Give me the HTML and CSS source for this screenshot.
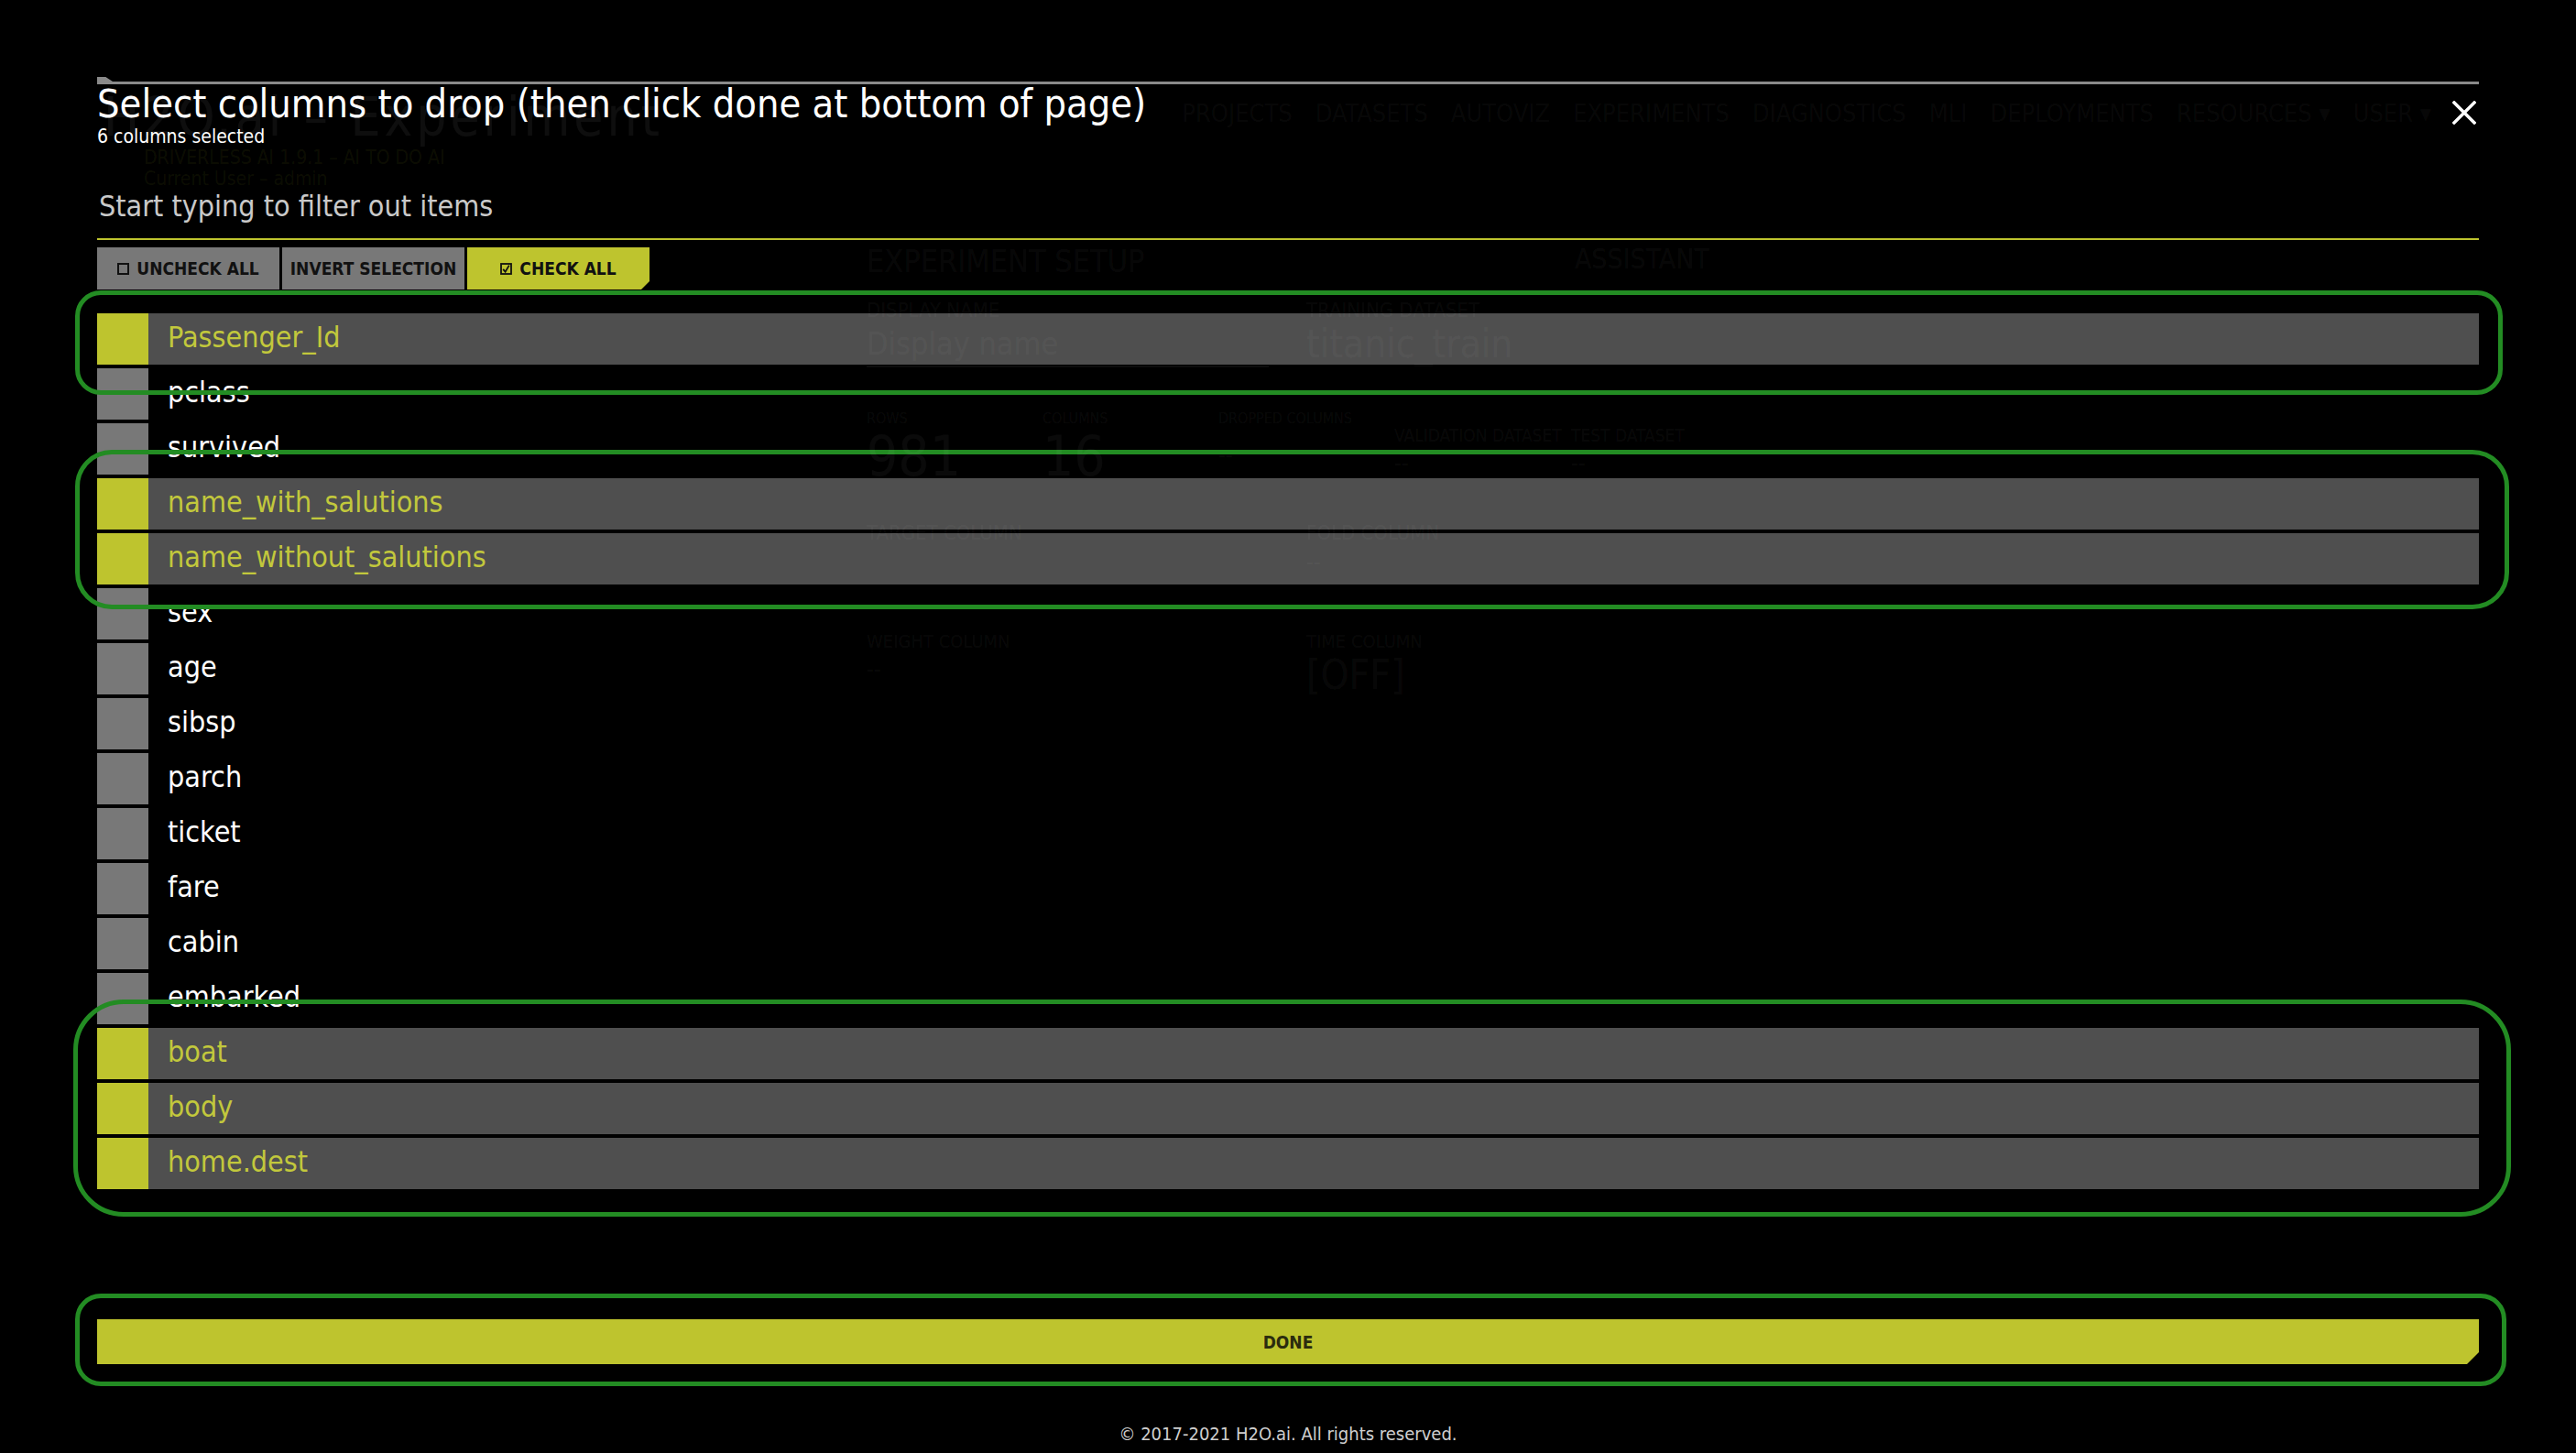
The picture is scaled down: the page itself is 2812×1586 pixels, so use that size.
FILE: index.html
```html
<!DOCTYPE html>
<html lang="en">
<head>
<meta charset="utf-8">
<title>Select columns to drop</title>
<link rel="stylesheet" href="styles.css">
</head>
<body>
<div class="page">
  <header class="page-head">
    <div class="brand">
      <div class="brand-title">H2O.ai – Experiment</div>
      <div class="brand-sub">DRIVERLESS AI 1.9.1 – AI TO DO AI</div>
      <div class="brand-user">Current User – admin</div>
    </div>
    <nav class="nav">
      <span>PROJECTS</span><span>DATASETS</span><span>AUTOVIZ</span><span>EXPERIMENTS</span><span>DIAGNOSTICS</span><span>MLI</span><span>DEPLOYMENTS</span><span>RESOURCES ▾</span><span>USER ▾</span>
    </nav>
  </header>
  <section class="setup">
    <div class="setup-head"><div class="setup-title">EXPERIMENT SETUP</div><div class="assist">ASSISTANT</div></div>
    <div class="frow frow-a">
      <div class="field w480"><div class="lbl">DISPLAY NAME</div><div class="val val-input">Display name</div></div>
      <div class="field"><div class="lbl">TRAINING DATASET</div><div class="val val-big">titanic_train</div></div>
    </div>
    <div class="frow frow-b">
      <div class="field w192"><div class="lbl sm">ROWS</div><div class="val val-num">981</div></div>
      <div class="field w192"><div class="lbl sm">COLUMNS</div><div class="val val-num">16</div></div>
      <div class="field w192"><div class="lbl sm">DROPPED COLUMNS</div><div class="val dash dash-drop">--</div></div>
      <div class="field w193 low"><div class="lbl md">VALIDATION DATASET</div><div class="val dash">--</div></div>
      <div class="field low"><div class="lbl md">TEST DATASET</div><div class="val dash">--</div></div>
    </div>
    <div class="frow frow-c">
      <div class="field w480"><div class="lbl">TARGET COLUMN</div></div>
      <div class="field"><div class="lbl">FOLD COLUMN</div><div class="val dash">--</div></div>
    </div>
    <div class="frow frow-d">
      <div class="field w480"><div class="lbl lg">WEIGHT COLUMN</div><div class="val dash">--</div></div>
      <div class="field"><div class="lbl lg">TIME COLUMN</div><div class="val val-off">[OFF]</div></div>
    </div>
  </section>
</div>

<div class="modal">
  <div class="modal-inner">
    <div class="topline"></div>
    <div class="title-row">
      <h1 class="title">Select columns to drop (then click done at bottom of page)</h1>
      <button class="close" aria-label="Close">
        <svg width="26" height="26" viewBox="0 0 26 26"><path d="M2 2 L24 24 M24 2 L2 24" stroke="#fff" stroke-width="3.4" stroke-linecap="square" fill="none"/></svg>
      </button>
    </div>
    <div class="count">6 columns selected</div>
    <input class="filter" type="text" placeholder="Start typing to filter out items">
    <div class="actions">
      <button class="act act-grey">
        <svg class="ico" width="13" height="13" viewBox="0 0 13 13"><rect x="1" y="1" width="11" height="11" fill="none" stroke="#111" stroke-width="2"/></svg>UNCHECK ALL</button>
      <button class="act act-grey">INVERT SELECTION</button>
      <button class="act act-yellow">
        <svg class="ico" width="13" height="13" viewBox="0 0 13 13"><rect x="1" y="1" width="11" height="11" fill="none" stroke="#111" stroke-width="1.8"/><path d="M3.2 6.8 L5.6 9.6 L9.8 2.6" fill="none" stroke="#111" stroke-width="1.8"/></svg>CHECK ALL</button>
    </div>
    <ul class="cols">
      <li class="col on"><span class="box"></span><span class="name">Passenger_Id</span></li>
      <li class="col"><span class="box"></span><span class="name">pclass</span></li>
      <li class="col"><span class="box"></span><span class="name">survived</span></li>
      <li class="col on"><span class="box"></span><span class="name">name_with_salutions</span></li>
      <li class="col on"><span class="box"></span><span class="name">name_without_salutions</span></li>
      <li class="col"><span class="box"></span><span class="name">sex</span></li>
      <li class="col"><span class="box"></span><span class="name">age</span></li>
      <li class="col"><span class="box"></span><span class="name">sibsp</span></li>
      <li class="col"><span class="box"></span><span class="name">parch</span></li>
      <li class="col"><span class="box"></span><span class="name">ticket</span></li>
      <li class="col"><span class="box"></span><span class="name">fare</span></li>
      <li class="col"><span class="box"></span><span class="name">cabin</span></li>
      <li class="col"><span class="box"></span><span class="name">embarked</span></li>
      <li class="col on"><span class="box"></span><span class="name">boat</span></li>
      <li class="col on"><span class="box"></span><span class="name">body</span></li>
      <li class="col on"><span class="box"></span><span class="name">home.dest</span></li>
    </ul>
    <button class="done">DONE</button>
    <footer class="foot">© 2017-2021 H2O.ai. All rights reserved.</footer>
  </div>
  <div class="hl hl-1"></div>
  <div class="hl hl-2"></div>
  <div class="hl hl-3"></div>
  <div class="hl hl-4"></div>
</div>
</body>
</html>
```

FILE: styles.css
```css
html, body {
  margin: 0;
  padding: 0;
  width: 2812px;
  height: 1586px;
  overflow: hidden;
  background: #000;
}
body {
  position: relative;
  font-family: "DejaVu Sans Condensed", "DejaVu Sans", sans-serif;
  font-stretch: condensed;
  color: #fff;
}

/* ---------- faint background page ---------- */
.page {
  position: relative;
  z-index: 2;
  pointer-events: none;
  color: rgba(255, 255, 255, 0.055);
}
.page-head {
  display: flex;
  justify-content: space-between;
  align-items: flex-start;
  padding: 100px 158px 0 113px;
}
.brand-title {
  font-size: 58px;
  line-height: 56px;
  font-weight: 300;
  letter-spacing: 4px;
}
.brand-sub {
  margin-top: 6px;
  margin-left: 44px;
  font-size: 21px;
  line-height: 21px;
  color: rgba(190, 196, 46, 0.085);
}
.brand-user {
  margin-top: 2px;
  margin-left: 44px;
  font-size: 21px;
  line-height: 21px;
  color: rgba(190, 196, 46, 0.075);
}
.nav {
  margin-top: 10px;
  display: flex;
  gap: 25px;
  font-size: 27px;
  line-height: 27px;
  color: rgba(255, 255, 255, 0.045);
}
.setup {
  margin: 62px 0 0 946px;
  width: 920px;
}
.setup-head {
  display: flex;
  justify-content: space-between;
  align-items: flex-start;
}
.setup-title {
  font-size: 34px;
  line-height: 34px;
}
.assist {
  font-size: 30px;
  line-height: 30px;
}
.frow {
  display: flex;
  align-items: flex-start;
}
.frow-a { margin-top: 26px; }
.frow-b { margin-top: 48px; }
.frow-c { margin-top: 43px; }
.frow-d { margin-top: 64px; }
.field { flex: none; }
.w480 { width: 480px; }
.w192 { width: 192px; }
.w193 { width: 193px; }
.low { margin-top: 17px; }
.lbl {
  font-size: 22px;
  line-height: 22px;
}
.lbl.sm { font-size: 16px; line-height: 16px; }
.lbl.md { font-size: 19px; line-height: 19px; }
.lbl.lg { font-size: 20px; line-height: 20px; }
.val-input {
  margin-top: 8px;
  width: 439px;
  font-size: 34px;
  line-height: 34px;
  padding-bottom: 7px;
  border-bottom: 2px solid rgba(255, 255, 255, 0.05);
}
.val-big {
  margin-top: 5px;
  font-size: 42px;
  line-height: 42px;
}
.val-num {
  margin-top: 3px;
  font-size: 60px;
  line-height: 60px;
  font-weight: 300;
  color: rgba(255, 255, 255, 0.04);
}
.dash {
  margin-top: 9px;
  font-size: 24px;
  line-height: 24px;
}
.dash-drop { margin-top: 20px; }
.val-off {
  margin-top: 5px;
  font-size: 44px;
  line-height: 44px;
}

/* ---------- modal ---------- */
.modal {
  position: absolute;
  inset: 0;
  z-index: 1;
  padding: 0 106px;
}
.modal-inner {
  display: flex;
  flex-direction: column;
}
.topline {
  position: relative;
  margin-top: 89px;
  height: 3px;
  background: #8a8a8a;
}
.topline::before {
  content: "";
  position: absolute;
  left: 0;
  top: -5px;
  width: 17px;
  height: 5px;
  background: #8a8a8a;
  clip-path: polygon(0 0, 55% 0, 100% 100%, 0 100%);
}
.title-row {
  display: flex;
  justify-content: space-between;
  align-items: flex-start;
  height: 42px;
}
.title {
  margin: 0;
  font-size: 43px;
  line-height: 42px;
  font-weight: normal;
  color: #fff;
  white-space: nowrap;
}
.close {
  margin: 18px 3px 0 0;
  padding: 0;
  width: 26px;
  height: 26px;
  border: 0;
  background: none;
  display: block;
}
.close svg { display: block; }
.count {
  margin-top: 3px;
  font-size: 21px;
  line-height: 24px;
  color: #fff;
}
.filter {
  display: block;
  box-sizing: content-box;
  margin: 50px 0 0 0;
  padding: 0 0 21px 2px;
  height: 28px;
  width: calc(100% - 2px);
  border: 0;
  border-bottom: 2px solid #bec42e;
  background: transparent;
  outline: none;
  font-family: inherit;
  font-stretch: condensed;
  font-size: 32px;
  line-height: 28px;
  color: #ddd;
}
.filter::placeholder {
  color: #c9c9c9;
  opacity: 1;
}
.actions {
  margin-top: 8px;
  display: flex;
  gap: 3px;
}
.act {
  display: flex;
  align-items: center;
  justify-content: center;
  gap: 8px;
  width: 199px;
  height: 46px;
  padding: 0;
  border: 0;
  font-family: inherit;
  font-stretch: condensed;
  font-weight: bold;
  font-size: 19px;
  color: #111;
}
.act-grey { background: #787878; }
.act-yellow {
  background: #bec42e;
  clip-path: polygon(0 0, 100% 0, 100% calc(100% - 9px), calc(100% - 9px) 100%, 0 100%);
}
.ico { display: block; flex: none; }
.cols {
  list-style: none;
  margin: 26px 0 0 0;
  padding: 0;
  display: flex;
  flex-direction: column;
  gap: 4px;
}
.col {
  display: flex;
  align-items: flex-start;
  height: 56px;
}
.box {
  flex: none;
  width: 56px;
  height: 56px;
  background: #787878;
}
.name {
  padding-left: 21px;
  font-size: 32px;
  line-height: 53px;
  color: #fff;
}
.col.on { background: #4f4f4f; }
.col.on .box { background: #bec42e; }
.col.on .name { color: #c2c83c; }
.done {
  margin-top: 142px;
  height: 49px;
  width: 100%;
  padding: 0;
  border: 0;
  background: #bec42e;
  clip-path: polygon(0 0, 100% 0, 100% calc(100% - 13px), calc(100% - 13px) 100%, 0 100%);
  font-family: inherit;
  font-stretch: condensed;
  font-weight: bold;
  font-size: 19px;
  color: #2b2c0e;
}
.foot {
  margin-top: 64px;
  text-align: center;
  font-size: 20px;
  line-height: 24px;
  color: #cfcfcf;
}

/* ---------- green annotation outlines ---------- */
.hl {
  position: absolute;
  box-sizing: border-box;
  border: 5px solid #238c23;
  pointer-events: none;
}
.hl-1 { left: 82px; top: 317px; width: 2650px; height: 114px; border-radius: 28px; }
.hl-2 { left: 82px; top: 491px; width: 2657px; height: 174px; border-radius: 40px; }
.hl-3 { left: 80px; top: 1091px; width: 2661px; height: 237px; border-radius: 55px; }
.hl-4 { left: 82px; top: 1412px; width: 2654px; height: 101px; border-radius: 28px; }
```
